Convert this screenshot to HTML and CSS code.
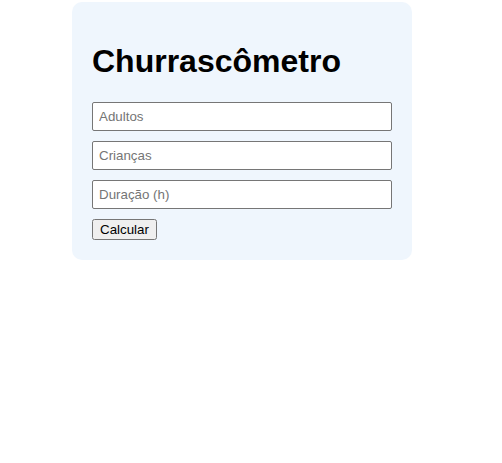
FILE: index.html
```html
<!DOCTYPE html>
<html lang="pt-BR">
<head>
<meta charset="utf-8">
<title>Churrascômetro</title>
<link rel="stylesheet" href="styles.css">
</head>
<body>
<div class="card">
  <h1 class="title">Churrascômetro</h1>
  <input class="field" type="number" placeholder="Adultos">
  <input class="field" type="number" placeholder="Crianças">
  <input class="field" type="number" placeholder="Duração (h)">
  <button class="btn">Calcular</button>
</div>
</body>
</html>
```

FILE: styles.css
```css
body {
  margin: 0;
  font-family: "Liberation Sans", Arial, sans-serif;
  background: #ffffff;
}
.card {
  width: 300px;
  margin: 2px 0 0 72px;
  padding: 20px;
  background: #eff6fd;
  border-radius: 10px;
}
.title {
  font-size: 32px;
  font-weight: bold;
  margin: 21.44px 0;
  color: #000;
}
.field {
  display: block;
  box-sizing: border-box;
  width: 100%;
  padding: 6px;
  margin: 0 0 10px 0;
  font-family: "Liberation Sans", Arial, sans-serif;
  font-size: 13.333px;
  border: 1px solid #767676;
  border-radius: 2px;
  background: #fff;
}
.field::placeholder {
  color: #757575;
}
.btn {
  font-family: "Liberation Sans", Arial, sans-serif;
  font-size: 13.333px;
}
```
